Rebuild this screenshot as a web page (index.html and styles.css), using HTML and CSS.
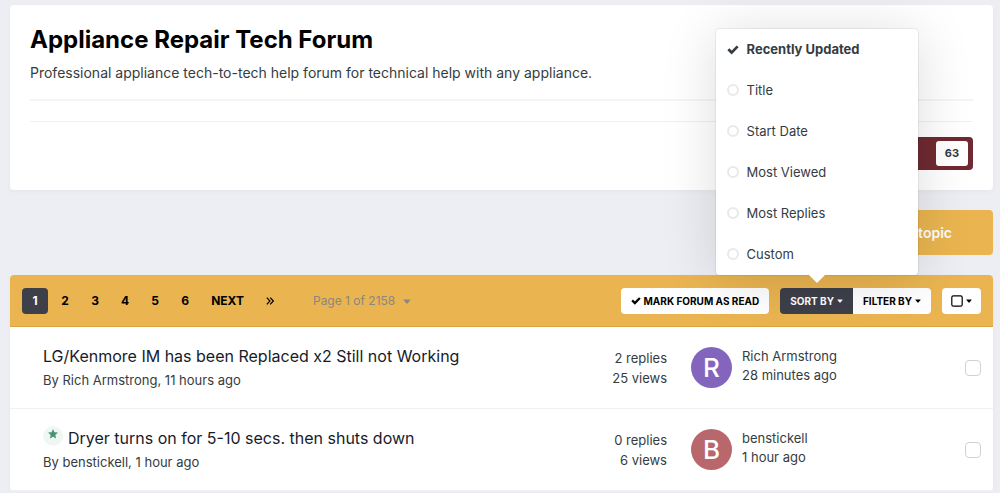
FILE: index.html
```html
<!DOCTYPE html>
<html lang="en">
<head>
<meta charset="utf-8">
<meta name="viewport" content="width=device-width, initial-scale=1">
<title>Appliance Repair Tech Forum</title>
<link rel="stylesheet" href="styles.css">
</head>
<body>
<svg class="sprite" aria-hidden="true">
  <symbol id="check" viewBox="0 0 14 12"><path d="M1.6 5.8l3.8 3.8 7-7.2" fill="none" stroke="currentColor" stroke-width="3.2"/></symbol>
  <symbol id="caret" viewBox="0 0 8 5"><path d="M.8.4h6.4q.6.1.2.7L4.5 4.5q-.5.5-1 0L.6 1.1Q.2.5.8.4z" fill="currentColor"/></symbol>
</svg>
<main class="page">
  <header class="card forum-header">
    <h1 class="forum-title">Appliance Repair Tech Forum</h1>
    <p class="forum-desc">Professional appliance tech-to-tech help forum for technical help with any appliance.</p>
    <hr class="rule">
    <hr class="rule">
    <div class="follow-row">
      <button class="follow" type="button" aria-label="Followers"><span class="follow-count">63</span></button>
    </div>
  </header>

  <div class="actions">
    <a class="new-topic" href="#new">Start new topic</a>
  </div>

  <section class="card topics">
    <div class="toolbar">
      <nav class="pagination" aria-label="Pages">
        <a class="page-link current" href="#p1" aria-current="page">1</a>
        <a class="page-link" href="#p2">2</a>
        <a class="page-link" href="#p3">3</a>
        <a class="page-link" href="#p4">4</a>
        <a class="page-link" href="#p5">5</a>
        <a class="page-link" href="#p6">6</a>
        <a class="page-link" href="#next">NEXT</a>
        <a class="page-link" href="#last" aria-label="Last page"><svg class="last-icon" viewBox="0 0 8 8"><path d="M.8.6L4 4 .8 7.4M4.2.6L7.4 4 4.2 7.4" fill="none" stroke="currentColor" stroke-width="1.2"/></svg></a>
        <a class="page-jump" href="#jump">Page 1 of 2158 <svg class="caret"><use href="#caret"/></svg></a>
      </nav>
      <div class="tools">
        <button class="tool" type="button"><svg class="tool-check"><use href="#check"/></svg>MARK FORUM AS READ</button>
        <div class="tool-group">
          <div class="sort">
            <button class="tool active" type="button" aria-expanded="true">SORT BY<svg class="caret-small"><use href="#caret"/></svg></button>
            <ul class="menu">
              <li><a class="menu-item selected" href="#updated"><svg class="menu-check"><use href="#check"/></svg>Recently Updated</a></li>
              <li><a class="menu-item" href="#title"><span class="ring"></span>Title</a></li>
              <li><a class="menu-item" href="#start"><span class="ring"></span>Start Date</a></li>
              <li><a class="menu-item" href="#viewed"><span class="ring"></span>Most Viewed</a></li>
              <li><a class="menu-item" href="#replies"><span class="ring"></span>Most Replies</a></li>
              <li><a class="menu-item" href="#custom"><span class="ring"></span>Custom</a></li>
            </ul>
          </div>
          <button class="tool" type="button">FILTER BY<svg class="caret-small"><use href="#caret"/></svg></button>
        </div>
        <button class="tool icon-tool" type="button" aria-label="Select"><svg class="square" viewBox="0 0 12 12"><rect x=".8" y=".8" width="10.4" height="10.4" rx="1.6" fill="none" stroke="currentColor" stroke-width="1.2"/></svg><svg class="caret-small"><use href="#caret"/></svg></button>
      </div>
    </div>

    <article class="topic">
      <div class="topic-main">
        <h2 class="topic-title"><a href="#t1">LG/Kenmore IM has been Replaced x2 Still not Working</a></h2>
        <p class="topic-meta">By <a href="#u1">Rich Armstrong</a>, 11 hours ago</p>
      </div>
      <ul class="stats"><li>2 replies</li><li>25 views</li></ul>
      <div class="last-post">
        <svg class="avatar" viewBox="0 0 41 41" role="img" aria-label="R"><circle cx="20.5" cy="20.5" r="20.5" fill="#8465bd"/><text class="initial" x="20.5" y="30" text-anchor="middle">R</text></svg>
        <div class="last-text"><a href="#u1">Rich Armstrong</a><a href="#l1">28 minutes ago</a></div>
      </div>
      <input class="pick" type="checkbox" aria-label="Select topic LG/Kenmore IM">
    </article>

    <article class="topic">
      <div class="topic-main">
        <h2 class="topic-title"><span class="badge"><svg class="star" viewBox="0 0 10 10"><path d="M5 0l1.4 3.3 3.6.3-2.7 2.3.8 3.6L5 7.7 1.9 9.5l.8-3.6L0 3.6l3.6-.3z" fill="#4a9274"/></svg></span><a href="#t2">Dryer turns on for 5-10 secs. then shuts down</a></h2>
        <p class="topic-meta">By <a href="#u2">benstickell</a>, 1 hour ago</p>
      </div>
      <ul class="stats"><li>0 replies</li><li>6 views</li></ul>
      <div class="last-post">
        <svg class="avatar" viewBox="0 0 41 41" role="img" aria-label="B"><circle cx="20.5" cy="20.5" r="20.5" fill="#b8686d"/><text class="initial" x="20.5" y="30" text-anchor="middle">B</text></svg>
        <div class="last-text"><a href="#u2">benstickell</a><a href="#l2">1 hour ago</a></div>
      </div>
      <input class="pick" type="checkbox" aria-label="Select topic Dryer turns on">
    </article>
  </section>
</main>
</body>
</html>
```

FILE: styles.css
```css
* { box-sizing: border-box; }
body {
  margin: 0;
  background: #edeef3;
  color: #353c41;
  font: 14px/20px Inter, "Liberation Sans", sans-serif;
}
a { color: inherit; text-decoration: none; }
h1, h2, p, ul { margin: 0; padding: 0; }
ul { list-style: none; }
button { font: inherit; border: 0; cursor: pointer; }
.sprite { position: absolute; width: 0; height: 0; }

.page { padding: 5px 7px 0 10px; }
.card { background: #fff; border-radius: 4px; box-shadow: 0 2px 4px rgba(0, 0, 0, .03); }

.forum-header { padding: 20px; }
.forum-title { color: #000; font-size: 24px; line-height: 30px; font-weight: 700; }
.forum-desc { margin: 8px 0 16px; }
.rule { height: 2px; margin: 0 0 20px; border: 0; background: #f5f5f5; }
.rule + .rule { height: 1px; margin-bottom: 15px; background: #f0f0f1; }
.follow-row { display: flex; justify-content: flex-end; }
.follow {
  display: flex;
  justify-content: flex-end;
  width: 120px;
  padding: 4px 5px;
  border-radius: 4px;
  background: #6f2a31;
}
.follow-count {
  padding: 0 9px;
  border-radius: 3px;
  background: #fff;
  color: #353c41;
  font-size: 11px;
  line-height: 25px;
  font-weight: 700;
}

.actions { display: flex; justify-content: flex-end; margin: 20px 0; }
.new-topic {
  padding: 0 41px;
  border-radius: 4px;
  background: #eab550;
  color: #fff;
  font-weight: 600;
  line-height: 45px;
}

.toolbar {
  display: flex;
  justify-content: space-between;
  align-items: center;
  height: 52px;
  padding: 0 12px;
  border-bottom: 1px solid #d9a441;
  border-radius: 4px 4px 0 0;
  background: #eab550;
}
.pagination { display: flex; align-items: center; gap: 4px; }
.page-link {
  min-width: 26px;
  padding: 0 9px;
  border-radius: 4px;
  color: #000;
  font-size: 12px;
  font-weight: 700;
  line-height: 26px;
  text-align: center;
}
.current { background: #3d4049; color: #fff; }
.last-icon { width: 8px; height: 8px; }
.page-jump { margin-left: 26px; color: #8a8680; font-size: 12px; }
.caret { width: 8px; height: 5px; margin-left: 4px; vertical-align: middle; }
.tools { display: flex; gap: 11px; }
.tool-group { display: flex; }
.tool {
  display: flex;
  align-items: center;
  height: 26px;
  padding: 0 10px;
  border-radius: 4px;
  background: #fff;
  color: #000;
  font-size: 10px;
  font-weight: 700;
}
.tool-group > .tool { border-radius: 0 4px 4px 0; }
.tool.active { border-radius: 4px 0 0 4px; background: #3d4049; color: #fff; }
.icon-tool { padding: 0 9px; }
.tool-check { width: 10px; height: 9px; margin-right: 3px; }
.caret-small { width: 6px; height: 4px; margin-left: 3px; }
.square { width: 12px; height: 12px; }

/* The open menu sits above its button, with a pointer below it. */
.sort { position: relative; }
.menu {
  position: absolute;
  z-index: 1;
  left: 50%;
  bottom: calc(100% + 13px);
  width: 202px;
  margin-left: -101px;
  border-radius: 4px;
  background: #fff;
  box-shadow: 0 0 0 1px rgba(0, 0, 0, .06), 0 5px 55px rgba(0, 0, 0, .14);
}
.menu::after {
  content: "";
  position: absolute;
  top: 100%;
  left: 50%;
  margin-left: -8px;
  border: 8px solid transparent;
  border-top-color: #fff;
  border-bottom: 0;
}
.menu-item {
  display: flex;
  align-items: center;
  gap: 8px;
  padding: 0 11px;
  font-size: 13px;
  line-height: 41px;
}
.selected { font-weight: 700; }
.menu-check { width: 12px; height: 11px; }
.ring { width: 12px; height: 12px; border: 2px solid #e9e9ea; border-radius: 50%; }

.topic {
  display: flex;
  align-items: center;
  padding: 19px 12px 19px 33px;
  border-bottom: 1px solid #f0f1f4;
}
.topic-main { flex: 1; }
.topic-title {
  display: flex;
  align-items: center;
  height: 20px;
  color: #171b2b;
  font-size: 16px;
  line-height: 20px;
  font-weight: 400;
}
.topic-meta { margin-top: 5px; font-size: 13px; line-height: 18px; }
.badge {
  display: flex;
  justify-content: center;
  width: 20px;
  height: 20px;
  margin: 0 5px 4px 0;
  padding-top: 3px;
  border-radius: 50%;
  background: #eef7f3;
}
.star { width: 10px; height: 10px; }
.stats { margin-right: 24px; font-size: 13px; text-align: right; }
.last-post { display: flex; align-items: center; gap: 10px; width: 274px; }
.avatar { width: 41px; height: 41px; }
.initial { fill: #fff; font-size: 26px; font-weight: 500; }
.last-text { display: flex; flex-direction: column; padding-bottom: 3px; font-size: 13px; line-height: 19px; }
.pick {
  appearance: none;
  width: 16px;
  height: 16px;
  margin: 0;
  border: 1px solid #cfd1d8;
  border-radius: 4px;
  background: #fff;
}
```
